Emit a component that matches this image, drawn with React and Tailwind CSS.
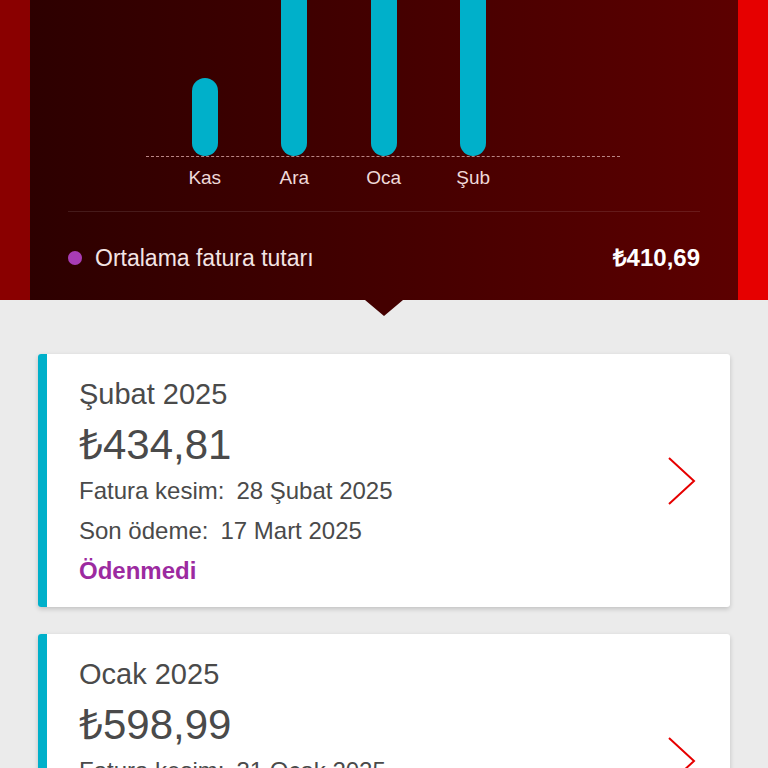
import React from "react";

const months = [
  { label: "Kas", h: 78 },
  { label: "Ara", h: 230 },
  { label: "Oca", h: 230 },
  { label: "Şub", h: 230 },
];

const bills = [
  {
    title: "Şubat 2025",
    amount: "₺434,81",
    cut: "28 Şubat 2025",
    due: "17 Mart 2025",
  },
  {
    title: "Ocak 2025",
    amount: "₺598,99",
    cut: "31 Ocak 2025",
    due: "17 Şubat 2025",
  },
];

function Chevron() {
  return (
    <svg width="30" height="50" viewBox="0 0 30 50" fill="none">
      <polyline
        points="2,2 27,25 2,48"
        stroke="#e60000"
        strokeWidth="2"
        strokeLinejoin="miter"
        fill="none"
      />
    </svg>
  );
}

function BillCard({ bill }) {
  return (
    <div className="flex bg-white rounded-[3px] overflow-hidden shadow-[0_2px_5px_rgba(0,0,0,0.18)]">
      <div className="w-[9px] bg-[#00b0ca] shrink-0" />
      <div className="flex-1 flex items-center pr-[33px]">
        <div className="flex-1 pl-[32px] pt-[23px] pb-[16px] text-[#4a4a4a]">
          <div className="text-[29px] leading-[34px]">{bill.title}</div>
          <div className="text-[42px] leading-[48px] mt-[10px]">{bill.amount}</div>
          <div className="text-[24px] leading-[40px] mt-[2px]">
            <span>Fatura kesim:</span>
            <span className="ml-[12px]">{bill.cut}</span>
          </div>
          <div className="text-[24px] leading-[40px]">
            <span>Son ödeme:</span>
            <span className="ml-[12px]">{bill.due}</span>
          </div>
          <div className="text-[24px] leading-[40px] font-bold text-[#9c2aa0]">Ödenmedi</div>
        </div>
        <Chevron />
      </div>
    </div>
  );
}

export default function App() {
  return (
    <div className="h-[768px] w-full overflow-hidden bg-[#ebebeb] font-['Liberation_Sans',Arial,sans-serif]">
      <div className="flex h-[300px]">
        <div className="w-[30px] bg-[#8a0000]" />
        <div className="relative flex-1 flex flex-col bg-linear-to-r from-[#2d0000] to-[#5c0000]">
          <div className="ml-[116px] w-[474px] h-[157px] border-b border-dashed border-[#b98585] overflow-hidden flex items-end pl-[14px]">
            {months.map((m) => (
              <div key={m.label} className="w-[89.5px] flex justify-center">
                <div className="w-[26px] rounded-full bg-[#00b0ca]" style={{ height: m.h }} />
              </div>
            ))}
          </div>
          <div className="ml-[116px] w-[474px] flex pl-[14px] pt-[9px]">
            {months.map((m) => (
              <div key={m.label} className="w-[89.5px] text-center text-[19px] leading-[24px] text-[#efd9d9]">
                {m.label}
              </div>
            ))}
          </div>
          <div className="mx-[38px] mt-[21px] h-px bg-white/10" />
          <div className="mx-[38px] mt-[24px] h-[44px] flex items-center">
            <div className="w-[14px] h-[14px] rounded-full bg-[#a83cb4]" />
            <div className="ml-[13px] text-[23px] text-[#f3e4e4] flex-1">Ortalama fatura tutarı</div>
            <div className="text-[24px] font-bold text-white">₺410,69</div>
          </div>
          <div className="absolute left-1/2 -translate-x-1/2 top-full w-0 h-0 border-l-[19px] border-r-[19px] border-t-[16px] border-l-transparent border-r-transparent border-t-[#440000]" />
        </div>
        <div className="w-[30px] bg-[#e60000]" />
      </div>
      <div className="px-[38px] pt-[54px] flex flex-col gap-[27px]">
        {bills.map((b) => (
          <BillCard key={b.title} bill={b} />
        ))}
      </div>
    </div>
  );
}
